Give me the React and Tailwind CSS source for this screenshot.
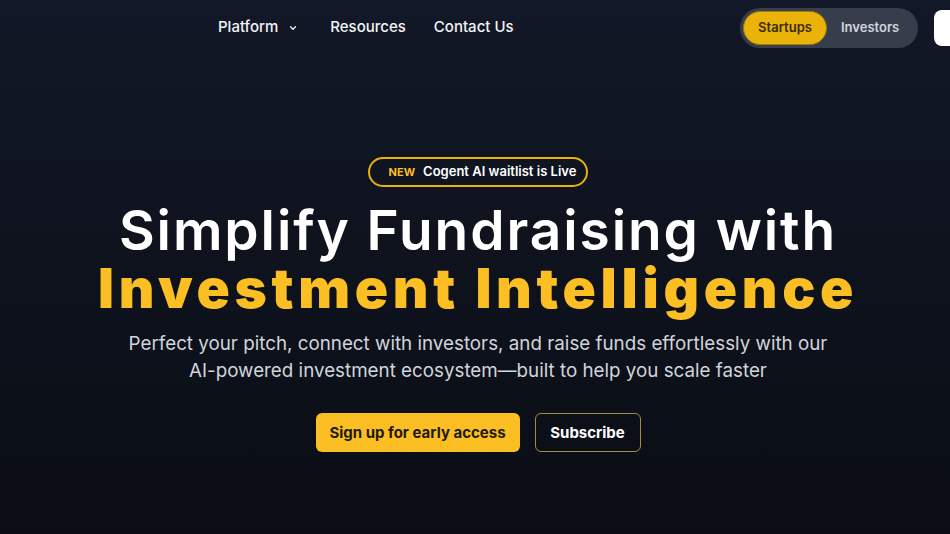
import React from 'react';

const Chevron = () => (
  <svg width="10" height="10" viewBox="0 0 24 24" fill="none" stroke="currentColor" strokeWidth="3" strokeLinecap="round" strokeLinejoin="round">
    <path d="M6 9l6 6 6-6" />
  </svg>
);

const App = () => {
  return (
    <div
      className="w-[950px] h-[534px] overflow-hidden bg-gradient-to-b from-[#121827] to-[#0a0d14] text-white"
      style={{ fontFamily: 'Inter, "Noto Sans", sans-serif' }}
    >
      <header className="flex items-center h-[55px] pl-[218px]">
        <nav className="flex items-center text-[15px] font-medium text-gray-100">
          <span className="flex items-center gap-[10px]">
            Platform <Chevron />
          </span>
          <span className="ml-[32px]">Resources</span>
          <span className="ml-[28px]">Contact Us</span>
        </nav>
        <div className="ml-auto flex items-center">
          <div className="flex items-center h-[40px] w-[178px] rounded-full bg-[#363d4b] p-[3px]">
            <span className="flex items-center justify-center h-[34px] w-[84px] rounded-full bg-[#eab308] border border-[#a37a08] text-[13px] font-semibold text-[#3b2c05]">
              Startups
            </span>
            <span className="ml-[14px] text-[13px] font-semibold text-gray-300">Investors</span>
          </div>
          <div className="ml-[16px] h-[36px] w-[16px] rounded-l-lg bg-white" />
        </div>
      </header>

      <main className="flex flex-col items-center pt-[102px] pl-[6px]">
        <div className="flex items-center h-[30px] pl-[19px] pr-[10px] rounded-full border-2 border-[#eab308] gap-[8px]">
          <span className="text-[11px] font-bold text-[#fbbf24]">NEW</span>
          <span className="text-[13px] font-semibold text-white">Cogent AI waitlist is Live</span>
        </div>

        <h1 className="mt-[14px] text-center leading-[58px]">
          <span className="block text-[55px] font-semibold tracking-[0.035em] text-white">
            Simplify Fundraising with
          </span>
          <span className="block text-[55px] font-black tracking-[0.085em] text-[#fbbf24]">
            Investment Intelligence
          </span>
        </h1>

        <p className="mt-[13px] text-center text-[18.8px] leading-[27px] text-gray-300 w-[720px]">
          Perfect your pitch, connect with investors, and raise funds effortlessly with our AI-powered investment ecosystem—built to help you scale faster
        </p>

        <div className="mt-[29px] flex items-center gap-[15px]">
          <button className="h-[39px] w-[204px] pt-[2px] rounded-md bg-[#fbbf24] text-[15px] font-bold text-[#231a06]">
            Sign up for early access
          </button>
          <button className="h-[39px] w-[106px] pt-[2px] rounded-md border border-[#a88a45] text-[15px] font-bold text-white">
            Subscribe
          </button>
        </div>
      </main>
    </div>
  );
};

export default App;
